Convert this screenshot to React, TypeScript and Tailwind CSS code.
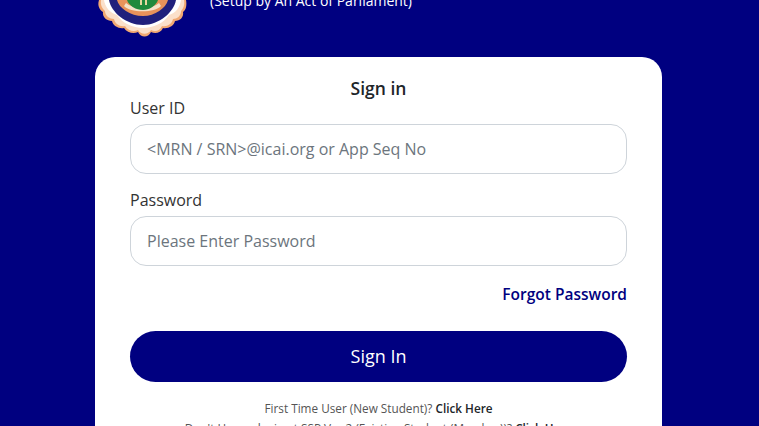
function Logo() {
  return (
    <svg width="92" height="40" viewBox="0 0 92 40" className="block">
      {/* scalloped rim */}
      <path d="M2 0 C0 6 3 10 6 12 C5 17 10 21 15 21 C16 26 22 29 27 28 C30 33 37 34 41 32 C44 38 51 38 54 32 C58 34 64 33 66 28 C71 29 77 26 78 21 C83 21 87 17 86 12 C89 10 90 5 89 0 Z" fill="#f0a873" />
      <path d="M4 0 C3 6 6 9 8 11 C8 16 13 19 17 19 C18 24 23 27 28 26 C31 31 37 32 41 30 C44 35 51 35 54 30 C58 32 63 31 65 26 C70 27 75 24 76 19 C80 19 84 16 84 11 C86 9 88 5 87 0 Z" fill="#fbe0ca" />
      <path d="M7 0 C8 7 13 13 20 15 C25 23 36 28 46 28 C56 28 67 23 72 15 C79 13 83 7 84 0 Z" fill="#ffffff" />
      {/* blue band */}
      <path d="M12 0 C14 12 29 25 46 25 C62 25 77 12 79 0 Z" fill="#20207c" />
      {/* orange ribbon and green field */}
      <path d="M20 0 C22 8 33 16 46 16 C58 16 69 8 71 0 Z" fill="#e8935a" />
      <path d="M27 6 C33 13 58 13 64 6 L62 3 C56 9 35 9 29 3 Z" fill="#f4e3c8" />
      <path d="M30 0 C32 6 39 10 46 10 C52 10 59 6 61 0 Z" fill="#1f8a3c" />
      <path d="M44 0 L44 5 M49 0 L49 5" stroke="#e7d9a0" strokeWidth="2" />
    </svg>
  );
}

function Field({ label, placeholder }: { label: string; placeholder: string }) {
  return (
    <div>
      <label className="block text-[16px] leading-[22px] text-[#333]">{label}</label>
      <input
        readOnly
        placeholder={placeholder}
        className="mt-[5px] block h-[50px] w-full rounded-[16px] border border-[#ced4da] bg-white px-[16px] text-[16px] text-[#495057] placeholder:text-[#6c757d] outline-none"
      />
    </div>
  );
}

export default function App() {
  return (
    <div className="h-[426px] w-full overflow-hidden bg-[#000080] font-['Open_Sans',sans-serif]">
      <div className="flex h-[57px] items-start pl-[97px]">
        <Logo />
        <p className="ml-[21px] -mt-[8px] text-[14px] leading-[18px] font-normal text-white">
          (Setup by An Act of Parliament)
        </p>
      </div>
      <div className="ml-[95px] w-[567px] rounded-[20px] bg-white px-[35px] pt-[19px] pb-[30px]">
        <h2 className="text-center text-[17.5px] leading-[24px] font-semibold text-[#212529]">Sign in</h2>
        <div className="-mt-[3px] flex flex-col gap-[15px]">
          <Field label="User ID" placeholder="<MRN / SRN>@icai.org or App Seq No" />
          <Field label="Password" placeholder="Please Enter Password" />
        </div>
        <div className="mt-[17px] text-right text-[15.5px] leading-[22px] font-semibold text-[#000080]">
          Forgot Password
        </div>
        <button className="mt-[26px] block h-[51px] w-full rounded-full bg-[#000080] text-[18px] text-white">
          Sign In
        </button>
        <div className="mt-[16px] text-center text-[11.75px] leading-[20px] text-[#555]">
          <p>
            First Time User (New Student)? <b className="font-semibold text-[#212529]">Click Here</b>
          </p>
          <p>
            Don't Have a login at SSP Ver.2 (Existing Student (Member))?{" "}
            <b className="font-semibold text-[#212529]">Click Here</b>
          </p>
        </div>
      </div>
    </div>
  );
}
